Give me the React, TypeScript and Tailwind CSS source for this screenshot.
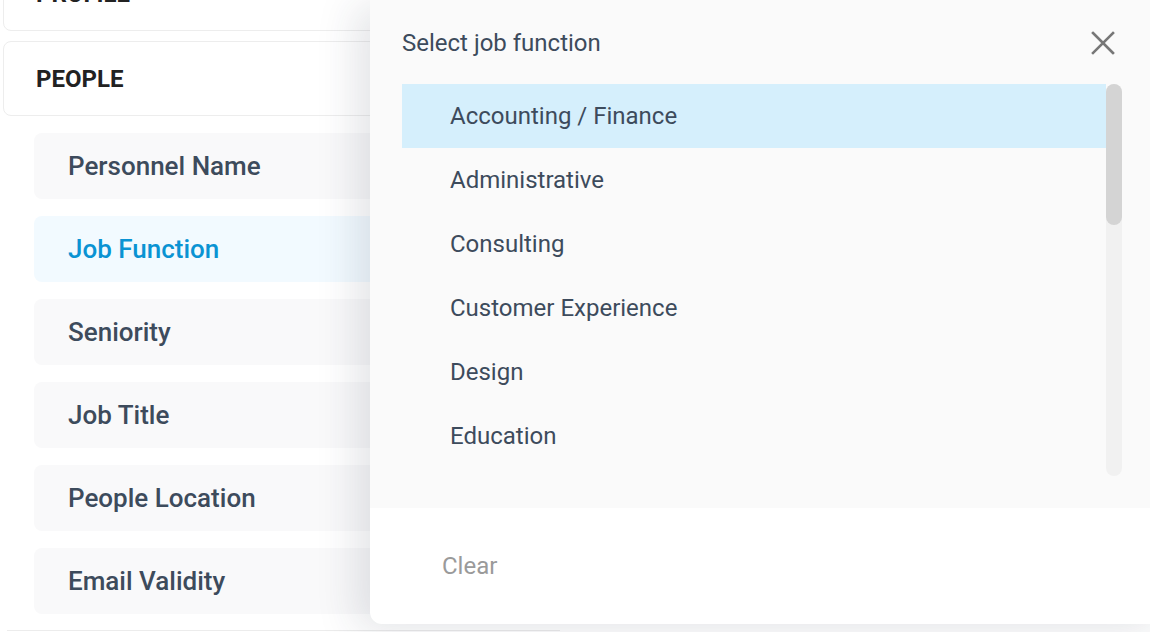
const peopleFilters = [
  'Personnel Name',
  'Job Function',
  'Seniority',
  'Job Title',
  'People Location',
  'Email Validity',
];

const jobFunctions = [
  'Accounting / Finance',
  'Administrative',
  'Consulting',
  'Customer Experience',
  'Design',
  'Education',
  'Engineering',
];

function CloseIcon() {
  return (
    <svg width="24" height="24" viewBox="0 0 24 24" fill="none" stroke="#777" strokeWidth={2.6} strokeLinecap="square">
      <path d="M2 2L22 22M22 2L2 22" />
    </svg>
  );
}

export default function App() {
  const active = 'Job Function';
  const selected = 'Accounting / Finance';

  return (
    <div
      className="relative w-[1150px] h-[632px] overflow-hidden bg-white"
      style={{ fontFamily: 'Roboto, "Noto Sans", sans-serif' }}
    >
      {/* filter sidebar */}
      <div className="w-[560px] pl-[3px] -mt-[44px] flex flex-col">
        <div className="h-[75px] rounded-lg border border-[#ededed] flex items-center px-8">
          <span className="text-[24px] font-bold text-[#222]">PROFILE</span>
        </div>
        <div className="mt-[10px] h-[75px] rounded-lg border border-[#ededed] flex items-center px-8">
          <span className="text-[24px] font-bold text-[#222]">PEOPLE</span>
        </div>
        <div className="pl-[31px] pt-[17px] flex flex-col gap-[17px]">
          {peopleFilters.map(name => (
            <div
              key={name}
              className={`h-[66px] rounded-lg flex items-center px-[34px] text-[26px] font-medium ${
                name === active ? 'bg-[#f2faff] text-[#0a93d3]' : 'bg-[#f9f9fa] text-[#3d4b5c]'
              }`}
            >
              {name}
            </div>
          ))}
        </div>
        <div className="mt-[16px] ml-[4px] border-t border-[#ececec]" />
      </div>

      {/* job function picker */}
      <div className="absolute left-[370px] top-0 w-[800px] h-[624px] rounded-bl-xl overflow-hidden bg-white shadow-[-14px_6px_40px_rgba(40,44,70,0.13)] flex flex-col">
        <div className="h-[508px] bg-[#fafafa] pl-8 pr-[44px] flex flex-col">
          <div className="h-[84px] flex items-center justify-between pt-[2px] pr-[11px]">
            <span className="text-[24px] text-[#3d4b5c]">Select job function</span>
            <CloseIcon />
          </div>
          <div className="flex">
            <div className="w-[704px] h-[392px] overflow-hidden">
              {jobFunctions.map(fn => (
                <div
                  key={fn}
                  className={`h-16 flex items-center pl-12 text-[24px] text-[#3d4b5c] ${
                    fn === selected ? 'bg-[#d5effc]' : ''
                  }`}
                >
                  {fn}
                </div>
              ))}
            </div>
            <div className="w-4 h-[392px] rounded-full bg-[#f1f1f1]">
              <div className="h-[141px] rounded-full bg-[#d4d4d4]" />
            </div>
          </div>
        </div>
        <div className="flex-1 flex items-center pl-[72px] pb-[1px]">
          <span className="text-[24px] text-[#9a9a9a]">Clear</span>
        </div>
      </div>
    </div>
  );
}
